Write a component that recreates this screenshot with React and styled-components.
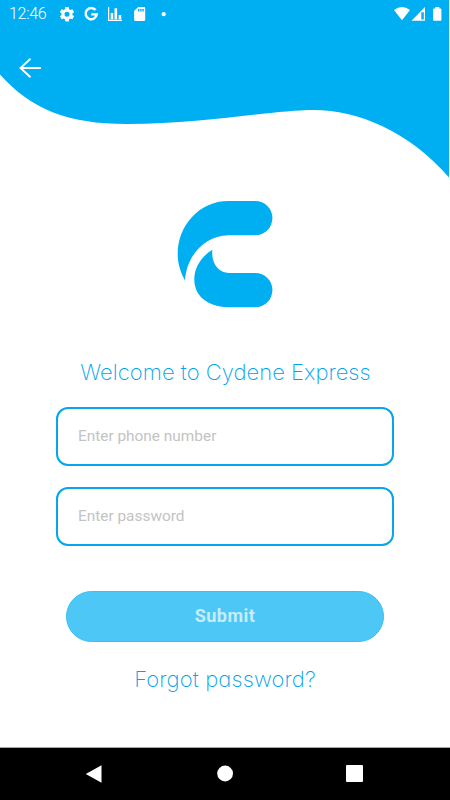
import React, { useState } from "react";
import styled, { createGlobalStyle } from "styled-components";

const GlobalStyle = createGlobalStyle`
  * {
    box-sizing: border-box;
  }
  body {
    margin: 0;
    background-color: #fff;
  }
`;

const Screen = styled.div`
  display: flex;
  flex-direction: column;
  width: 450px;
  height: 800px;
  overflow: hidden;
  background-color: #fff;
  font-family: Roboto, "Liberation Sans", sans-serif;
`;

const Header = styled.header`
  display: grid;
  grid-template-columns: 450px;
  grid-template-rows: 180px;
  > * {
    grid-area: 1 / 1;
  }
`;

const Wave = styled.svg`
  display: block;
  width: 450px;
  height: 180px;
`;

const HeaderContent = styled.div`
  display: flex;
  flex-direction: column;
  align-items: flex-start;
  z-index: 1;
`;

const StatusBar = styled.div`
  display: flex;
  align-items: center;
  width: 100%;
  height: 27px;
  padding: 0 7px 0 9px;
  color: #fff;
`;

const Time = styled.span`
  width: 50px;
  font-size: 16px;
  font-weight: 350;
  line-height: 28px;
  letter-spacing: -0.3px;
`;

const StatusIcons = styled.div`
  display: flex;
  align-items: center;
  margin-left: ${props => (props.$right ? "auto" : "0")};
  svg {
    display: block;
  }
`;

const BackButton = styled.button`
  margin: 28px 0 0 16px;
  padding: 0;
  border: 0;
  background: none;
  cursor: pointer;
  svg {
    display: block;
  }
`;

const Form = styled.form`
  display: flex;
  flex-direction: column;
  align-items: center;
  flex: 1;
  padding-top: 20px;
`;

const Logo = styled.svg`
  display: block;
  width: 96px;
  height: 108px;
`;

const Title = styled.h1`
  margin: 48px 0 0 1px;
  font-family: Inter, "Open Sans", sans-serif;
  font-feature-settings: "cv11";
  font-size: 22px;
  font-weight: 200;
  line-height: 32px;
  letter-spacing: 0.03px;
  white-space: nowrap;
  color: #00a3ec;
`;

const Input = styled.input`
  width: 338px;
  height: 59px;
  margin: ${props => (props.$first ? "19px" : "21px")} 0 0;
  padding: 0 20px 1px;
  border: 2px solid #06a5ed;
  border-radius: 12px;
  outline: none;
  background-color: #fff;
  font-family: inherit;
  font-size: 15.4px;
  color: #222;
  &::placeholder {
    color: #c3c3c3;
    opacity: 1;
  }
`;

const SubmitButton = styled.button`
  width: 318px;
  height: 51px;
  margin-top: 45px;
  padding: 0 0 2px;
  border: 1px solid #36c0f3;
  border-radius: 26px;
  background-color: #4dc7f5;
  font-family: inherit;
  font-size: 18px;
  font-weight: 700;
  letter-spacing: 0.5px;
  color: #c5edfc;
`;

const ForgotLink = styled.a`
  margin-top: 21px;
  font-family: Inter, "Open Sans", sans-serif;
  font-feature-settings: "cv11";
  font-size: 22px;
  font-weight: 200;
  line-height: 32px;
  letter-spacing: 0.13px;
  white-space: nowrap;
  color: #00a3ec;
  cursor: pointer;
`;

const NavBar = styled.nav`
  display: flex;
  align-items: center;
  justify-content: space-between;
  height: 53px;
  padding: 0 87px 1px 85px;
  border-top: 1px solid #a5a5a5;
  background-color: #000;
  svg {
    display: block;
  }
`;

function NotificationIcons() {
  return (
    <svg width="110" height="18" viewBox="59 4 110 18" fill="#fff">
      <g transform="translate(58.4 4.6) scale(.72)">
        <path d="M19.4 13c0-.3.1-.6.1-1s0-.7-.1-1l2.1-1.7c.2-.1.2-.4.1-.6l-2-3.4c-.1-.3-.4-.3-.6-.3l-2.5 1c-.5-.4-1.1-.7-1.7-1l-.4-2.6c0-.2-.2-.4-.5-.4h-4c-.2 0-.4.2-.5.4L9 5c-.6.3-1.2.6-1.7 1L4.9 5c-.3 0-.5 0-.6.2l-2 3.5c-.1.2-.1.4.1.6L4.5 11c0 .3-.1.7-.1 1s0 .7.1 1l-2.1 1.6c-.2.2-.2.4-.1.6l2 3.5c.1.2.4.3.6.2l2.5-1c.5.4 1 .7 1.7 1l.4 2.6c0 .3.2.5.5.5h4c.2 0 .5-.2.5-.4l.4-2.7c.6-.2 1.1-.6 1.6-1l2.5 1c.3.1.5 0 .6-.2l2-3.5c.2-.2.1-.4-.1-.6zM12 15.5a3.5 3.5 0 1 1 0-7 3.5 3.5 0 0 1 0 7z" />
      </g>
      <path
        d="M95.6 9.1A5.6 5.6 0 1 0 96.8 13.4H91.3"
        fill="none"
        stroke="#fff"
        strokeWidth="2.4"
      />
      <path d="M108 6h1.2v12.7H122V20h-14zM110.7 12h2.5v6.2h-2.5zM114.5 7.2h2.6v11h-2.6zM118.7 14h2.5v4.2h-2.5z" />
      <path
        fillRule="evenodd"
        d="M138.2 6H144q1.2 0 1.2 1.2v11.5q0 1.2-1.2 1.2h-8.7q-1.2 0-1.2-1.2V10zM138 8v2.4h1.4V8zm2.2 0v2.4h1.4V8zm2.2 0v2.4h1.4V8z"
      />
      <circle cx="163.7" cy="13.2" r="2.1" />
    </svg>
  );
}

function SystemIcons() {
  return (
    <svg width="50" height="18" viewBox="393 4 50 18" fill="#fff">
      <path d="M394 9Q402 3.2 410 9l-8 10.3z" />
      <path fillRule="evenodd" d="M425 6v13.7h-13.5zM421.3 11.3v7.2h2.5v-7.2z" />
      <path d="M435.3 6h4v1.4h1.2q.9 0 .9.9v10.5q0 .9-.9.9H434q-.9 0-.9-.9V8.3q0-.9.9-.9h1.3z" />
    </svg>
  );
}

function App() {
  const [phone, setPhone] = useState("");
  const [password, setPassword] = useState("");

  const handleSubmit = e => {
    e.preventDefault();
  };

  return (
    <Screen>
      <GlobalStyle />
      <Header>
        <Wave viewBox="0 0 450 180">
          <path
            d="M0 0H449V177.500C409 131 357 110 314 110C272 110 205 124 127 124C67 124 31 109 0 74.500Z"
            fill="#00aff1"
          />
        </Wave>
        <HeaderContent>
          <StatusBar>
            <Time>12:46</Time>
            <StatusIcons>
              <NotificationIcons />
            </StatusIcons>
            <StatusIcons $right>
              <SystemIcons />
            </StatusIcons>
          </StatusBar>
          <BackButton type="button" aria-label="Back">
            <svg width="26" height="26" viewBox="16 55 26 26" fill="none">
              <path
                d="M41 68H20.5M30.5 58.7L20.5 68l10 9.3"
                stroke="#fff"
                strokeWidth="1.9"
              />
            </svg>
          </BackButton>
        </HeaderContent>
      </Header>
      <Form onSubmit={handleSubmit}>
        <Logo viewBox="177 200 96 108" fill="#00aff1">
          <path d="M185 280.5C180.5 272 177.7 264 177.7 254C177.7 225 200 201 228 201H255.3A17.1 17.1 0 0 1 255.3 235.2H228.3C204 236 186.5 256 185 280.5Z" />
          <path d="M212.4 249.8C211 263 218 272.8 229 273H255.3A17.1 17.1 0 0 1 255.3 307.2H228.3C206 306.5 194.3 295 194.3 279.3C194.3 267 202 256 212.4 249.8Z" />
        </Logo>
        <Title>Welcome to Cydene Express</Title>
        <Input
          $first
          type="text"
          name="phone"
          placeholder="Enter phone number"
          value={phone}
          onChange={e => setPhone(e.target.value)}
        />
        <Input
          type="password"
          name="password"
          placeholder="Enter password"
          value={password}
          onChange={e => setPassword(e.target.value)}
        />
        <SubmitButton type="submit">Submit</SubmitButton>
        <ForgotLink>Forgot password?</ForgotLink>
      </Form>
      <NavBar>
        <svg width="17" height="18" viewBox="0 0 17 18" fill="#fff">
          <path d="M.8 9L16.5.3v17.4z" />
        </svg>
        <svg width="17" height="17" viewBox="0 0 17 17" fill="#fff">
          <circle cx="9.1" cy="8.5" r="7.9" />
        </svg>
        <svg width="17" height="17" viewBox="0 0 17 17" fill="#fff">
          <rect width="17" height="17" rx="1" />
        </svg>
      </NavBar>
    </Screen>
  );
}

export default App;
